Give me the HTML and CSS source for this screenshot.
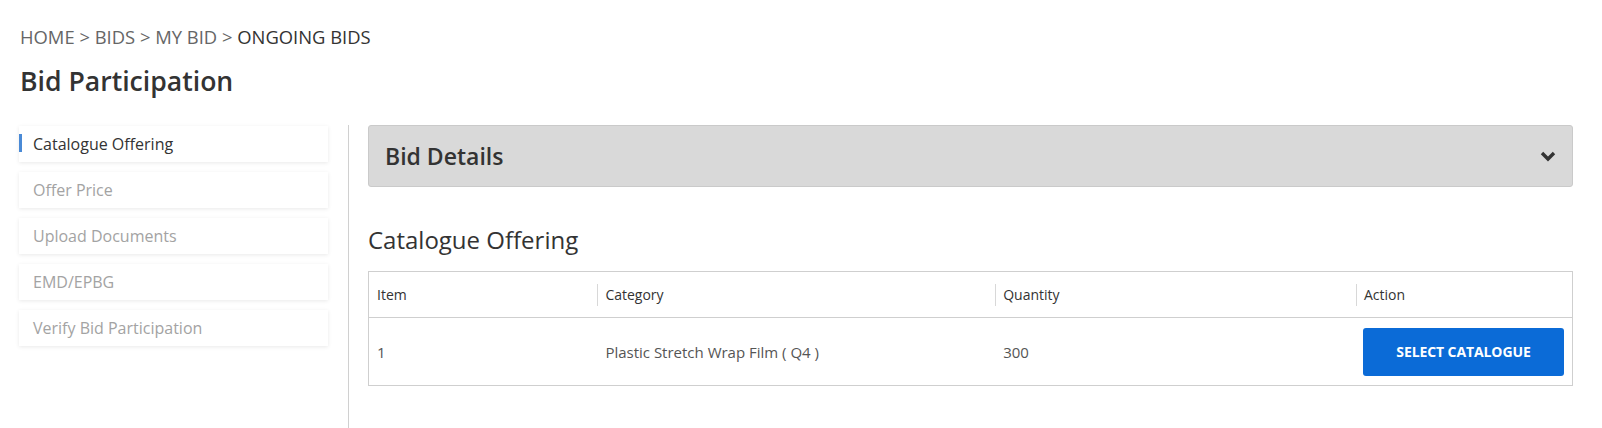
FILE: index.html
```html
<!DOCTYPE html>
<html>
<head>
<meta charset="utf-8">
<link rel="stylesheet" href="styles.css">
</head>
<body>
<div class="page">
  <div class="breadcrumb"><span class="crumb">HOME</span> &gt; <span class="crumb">BIDS</span> &gt; <span class="crumb">MY BID</span> &gt; <span class="crumb current">ONGOING BIDS</span></div>
  <h1 class="title">Bid Participation</h1>
  <div class="layout">
    <nav class="steps">
      <div class="step active">Catalogue Offering</div>
      <div class="step">Offer Price</div>
      <div class="step">Upload Documents</div>
      <div class="step">EMD/EPBG</div>
      <div class="step">Verify Bid Participation</div>
    </nav>
    <main class="content">
      <div class="panel">
        <span class="panel-title">Bid Details</span>
        <svg class="chevron" width="16" height="11" viewBox="0 0 16 11"><path d="M2 2 L8 8 L14 2" fill="none" stroke="#333" stroke-width="3.4"/></svg>
      </div>
      <h2 class="section-title">Catalogue Offering</h2>
      <table class="grid">
        <colgroup>
          <col class="c1"><col class="c2"><col class="c3"><col class="c4">
        </colgroup>
        <thead>
          <tr><th>Item</th><th class="sep">Category</th><th class="sep">Quantity</th><th class="sep">Action</th></tr>
        </thead>
        <tbody>
          <tr><td>1</td><td>Plastic Stretch Wrap Film ( Q4 )</td><td>300</td><td class="act"><button class="btn">SELECT CATALOGUE</button></td></tr>
        </tbody>
      </table>
    </main>
  </div>
</div>
</body>
</html>
```

FILE: styles.css
```css
* { box-sizing: border-box; }
html, body { margin: 0; padding: 0; background: #fff; }
body { font-family: "Open Sans", "Noto Sans", Arial, sans-serif; color: #333; }
.page { padding: 25px 29px 0 19px; height: 428px; display: flex; flex-direction: column; }
.breadcrumb { font-size: 18.4px; line-height: 24px; color: #666; padding-left: 1px; }
.crumb.current { color: #333; }
.title { margin: 14px 0 0 1px; font-size: 26.6px; line-height: 36px; font-weight: 600; color: #333; }
.layout { margin-top: 26px; display: grid; grid-template-columns: 309px 1fr; column-gap: 20px; flex: 1; }
.steps { display: flex; flex-direction: column; gap: 10px; padding-top: 1px; }
.step { height: 36px; line-height: 36px; padding-left: 14px; font-size: 16px; color: #a3a3a3; background: #fff; box-shadow: 0 1px 4px rgba(0,0,0,0.09); position: relative; }
.step.active { color: #333; }
.step.active::before { content: ""; position: absolute; left: 0; top: 8px; width: 3px; height: 18px; background: #4a8ad6; }
.content { border-left: 1px solid #d0d0d0; padding-left: 19px; }
.panel { height: 62px; background: #d9d9d9; border: 1px solid #cacaca; border-radius: 3px; display: flex; align-items: center; justify-content: space-between; padding: 0 16px 0 16px; }
.panel-title { font-size: 23px; font-weight: 600; color: #333; }
.chevron { display: block; }
.section-title { margin: 37px 0 15px; font-size: 24px; line-height: 32px; font-weight: 400; color: #333; }
.grid { width: 100%; border-collapse: collapse; border: 1px solid #cfcfcf; font-size: 14px; }
.c1 { width: 229px; } .c2 { width: 398px; } .c3 { width: 361px; }
.grid th { height: 46px; text-align: left; font-weight: 400; color: #333; padding: 0 8px; border-bottom: 1px solid #cfcfcf; position: relative; }
.grid th.sep::before { content: ""; position: absolute; left: 0; top: 12px; height: 22px; width: 1px; background: #d8d8d8; }
.grid td { height: 68px; padding: 0 8px; color: #555; font-size: 15px; }
.grid td.act { padding: 0 8px 0 7px; }
.btn { width: 201px; height: 48px; border: 0; border-radius: 3px; background: #0b6bd7; color: #fff; font-family: "Open Sans", Arial, sans-serif; font-weight: 700; font-size: 14px; letter-spacing: -0.1px; }
```
